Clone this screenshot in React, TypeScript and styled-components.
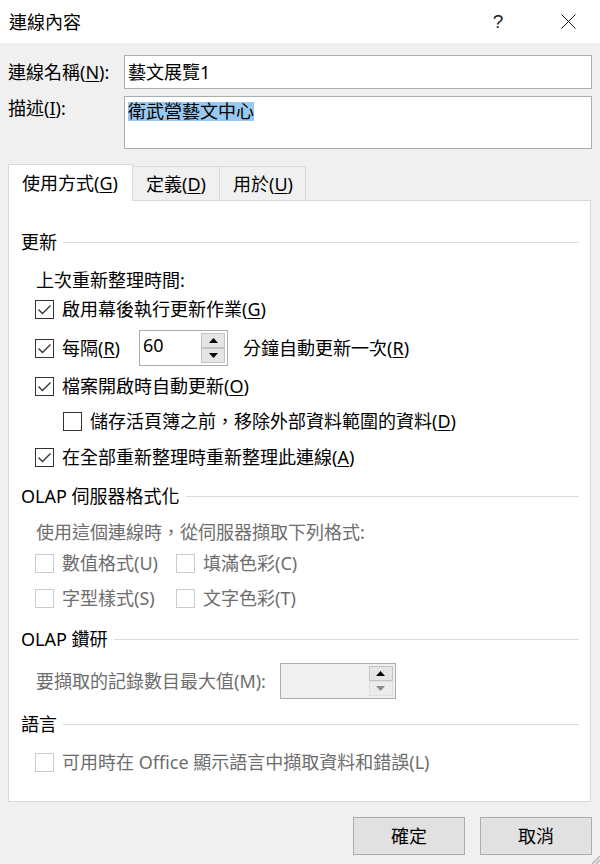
import styled, { createGlobalStyle } from 'styled-components';

const GlobalStyle = createGlobalStyle`
  html, body {
    margin: 0;
    padding: 0;
    background: #f0f0f0;
  }
  body {
    font-family: "Noto Sans", "Noto Sans CJK TC", sans-serif;
    color: #000;
  }
`;

const Dialog = styled.div`
  position: relative;
  width: 600px;
  height: 864px;
  background: #f0f0f0;
  display: flex;
  flex-direction: column;
  font-size: 18px;
  overflow: hidden;
`;

const TitleBar = styled.div`
  flex-shrink: 0;
  height: 43px;
  background: #fff;
  display: flex;
  align-items: center;
  padding: 0 9px 0 9px;
`;

const Title = styled.div`
  flex: 1;
  font-size: 18px;
  line-height: 24px;
`;

const TitleButton = styled.div<{ $gap?: number }>`
  width: 46px;
  height: 43px;
  display: flex;
  align-items: center;
  justify-content: center;
  margin-right: ${(p) => p.$gap ?? 0}px;
`;

const HelpGlyph = styled.span`
  font-family: "Liberation Sans", sans-serif;
  font-size: 19px;
  color: #1a1a1a;
`;

const Body = styled.div`
  display: flex;
  flex-direction: column;
  padding: 12px 8px 0 8px;
`;

const FormGrid = styled.div`
  display: grid;
  grid-template-columns: 116px 1fr;
  row-gap: 7px;
`;

const FieldLabel = styled.div<{ $top?: boolean }>`
  line-height: 24px;
  align-self: ${(p) => (p.$top ? 'start' : 'center')};
  white-space: nowrap;
`;

const TextBox = styled.div<{ $h: number }>`
  box-sizing: border-box;
  height: ${(p) => p.$h}px;
  border: 1px solid #adadad;
  background: #fff;
  padding: 0 3px;
  display: flex;
  align-items: ${(p) => (p.$h > 40 ? 'flex-start' : 'center')};
  padding-top: ${(p) => (p.$h > 40 ? 5 : 0)}px;
  line-height: 24px;
`;

const Selected = styled.span`
  display: inline-block;
  background: #99c9ef;
  line-height: 19px;
`;

const Key = styled.span`
  text-decoration: underline;
  text-underline-offset: 2px;
  text-decoration-thickness: 1px;
`;

const TabRow = styled.div`
  display: flex;
  align-items: flex-end;
  height: 36px;
  margin-top: 15px;
`;

const Tab = styled.div<{ $active?: boolean; $w: number }>`
  position: relative;
  z-index: 1;
  box-sizing: border-box;
  width: ${(p) => p.$w}px;
  height: ${(p) => (p.$active ? 37 : 34)}px;
  margin-bottom: ${(p) => (p.$active ? -1 : 0)}px;
  background: ${(p) => (p.$active ? '#fff' : '#f0f0f0')};
  border: 1px solid #d9d9d9;
  border-bottom: none;
  border-left: ${(p) => (p.$active ? '1px solid #d9d9d9' : 'none')};
  display: flex;
  align-items: center;
  padding-left: 13px;
  line-height: 24px;
  white-space: nowrap;
`;

const Panel = styled.div`
  box-sizing: border-box;
  height: 602px;
  margin-right: 1px;
  background: #fff;
  border: 1px solid #d9d9d9;
  padding: 0 11px 0 12px;
  display: flex;
  flex-direction: column;
`;

const SectionHead = styled.div<{ $mt: number }>`
  display: flex;
  align-items: center;
  gap: 6px;
  height: 24px;
  line-height: 24px;
  margin-top: ${(p) => p.$mt}px;
  white-space: nowrap;

  &::after {
    content: '';
    flex: 1;
    height: 1px;
    background: #dcdcdc;
  }
`;

const Row = styled.div<{ $mt: number; $indent: number; $h?: number }>`
  display: flex;
  align-items: center;
  height: ${(p) => p.$h ?? 24}px;
  margin-top: ${(p) => p.$mt}px;
  margin-left: ${(p) => p.$indent}px;
  line-height: 24px;
  white-space: nowrap;
`;

const Text = styled.span<{ $disabled?: boolean }>`
  color: ${(p) => (p.$disabled ? '#6d6d6d' : '#000')};
`;

const CheckLabel = styled.div`
  display: flex;
  align-items: center;
  gap: 8px;
  height: 24px;
  line-height: 24px;
  white-space: nowrap;
`;

const Box = styled.span<{ $disabled?: boolean }>`
  flex-shrink: 0;
  box-sizing: border-box;
  width: 19px;
  height: 19px;
  border: 1px solid ${(p) => (p.$disabled ? '#cccccc' : '#333333')};
  background: #fff;
  display: flex;
  align-items: center;
  justify-content: center;
`;

const OptionGrid = styled.div`
  display: grid;
  grid-template-columns: 141px auto;
  row-gap: 11px;
  margin-top: 7px;
  margin-left: 14px;
`;

const SpinBox = styled.div<{ $w: number; $disabled?: boolean }>`
  box-sizing: border-box;
  width: ${(p) => p.$w}px;
  height: 36px;
  border: 1px solid #adadad;
  background: ${(p) => (p.$disabled ? '#f0f0f0' : '#fff')};
  display: flex;
`;

const SpinValue = styled.div`
  flex: 1;
  padding: 2px 0 0 3px;
  line-height: 24px;
`;

const SpinColumn = styled.div`
  width: 24px;
  margin: 2px 2px 2px 0;
  display: flex;
  flex-direction: column;
`;

const SpinButton = styled.div<{ $dim?: boolean }>`
  flex: 1;
  box-sizing: border-box;
  border: 1px solid ${(p) => (p.$dim ? '#e0e0e0' : '#c4c4c4')};
  background: ${(p) => (p.$dim ? '#ececec' : '#e5e5e5')};
  display: flex;
  align-items: center;
  justify-content: center;
`;

const ButtonRow = styled.div`
  display: flex;
  justify-content: flex-end;
  gap: 15px;
  margin-top: 15px;
`;

const DialogButton = styled.div`
  box-sizing: border-box;
  width: 112px;
  height: 38px;
  background: #e1e1e1;
  border: 1px solid #adadad;
  display: flex;
  align-items: center;
  justify-content: center;
  line-height: 24px;
`;

const Grip = styled.svg`
  position: absolute;
  right: 0;
  bottom: 0;
`;

const Check = ({ checked, disabled }: { checked?: boolean; disabled?: boolean }) => (
  <Box $disabled={disabled}>
    {checked && (
      <svg width="17" height="17" viewBox="0 0 17 17">
        <path d="M2.5 8.5 L6.5 12.5 L14.5 4.5" fill="none" stroke="#333" strokeWidth="1.3" />
      </svg>
    )}
  </Box>
);

const Arrow = ({ up, color }: { up?: boolean; color: string }) => (
  <svg width="9" height="5" viewBox="0 0 9 5">
    <path d={up ? 'M0 5 L4.5 0 L9 5 Z' : 'M0 0 L9 0 L4.5 5 Z'} fill={color} />
  </svg>
);

const CheckItem = ({
  checked,
  disabled,
  children,
}: {
  checked?: boolean;
  disabled?: boolean;
  children: React.ReactNode;
}) => (
  <CheckLabel>
    <Check checked={checked} disabled={disabled} />
    <Text $disabled={disabled}>{children}</Text>
  </CheckLabel>
);

export default function App() {
  return (
    <>
      <GlobalStyle />
      <Dialog>
        <TitleBar>
          <Title>連線內容</Title>
          <TitleButton $gap={24}>
            <HelpGlyph>?</HelpGlyph>
          </TitleButton>
          <TitleButton>
            <svg width="15" height="15" viewBox="0 0 15 15">
              <path d="M0.5 0.5 L14.5 14.5 M14.5 0.5 L0.5 14.5" stroke="#111" strokeWidth="1" />
            </svg>
          </TitleButton>
        </TitleBar>

        <Body>
          <FormGrid>
            <FieldLabel>
              連線名稱(<Key>N</Key>):
            </FieldLabel>
            <TextBox $h={34}>藝文展覽1</TextBox>
            <FieldLabel $top>
              描述(<Key>I</Key>):
            </FieldLabel>
            <TextBox $h={53}>
              <Selected>衛武營藝文中心</Selected>
            </TextBox>
          </FormGrid>

          <TabRow>
            <Tab $active $w={125}>
              使用方式(<Key>G</Key>)
            </Tab>
            <Tab $w={87}>
              定義(<Key>D</Key>)
            </Tab>
            <Tab $w={86}>
              用於(<Key>U</Key>)
            </Tab>
          </TabRow>

          <Panel>
            <SectionHead $mt={29}>更新</SectionHead>
            <Row $mt={14} $indent={15}>
              <Text>上次重新整理時間:</Text>
            </Row>
            <Row $mt={5} $indent={14}>
              <CheckItem checked>
                啟用幕後執行更新作業(<Key>G</Key>)
              </CheckItem>
            </Row>
            <Row $mt={9} $indent={14} $h={36}>
              <CheckItem checked>
                每隔(<Key>R</Key>)
              </CheckItem>
              <SpinBox $w={89} style={{ marginLeft: 19 }}>
                <SpinValue>60</SpinValue>
                <SpinColumn>
                  <SpinButton>
                    <Arrow up color="#000" />
                  </SpinButton>
                  <SpinButton>
                    <Arrow color="#000" />
                  </SpinButton>
                </SpinColumn>
              </SpinBox>
              <Text style={{ marginLeft: 15 }}>
                分鐘自動更新一次(<Key>R</Key>)
              </Text>
            </Row>
            <Row $mt={8} $indent={14}>
              <CheckItem checked>
                檔案開啟時自動更新(<Key>O</Key>)
              </CheckItem>
            </Row>
            <Row $mt={11} $indent={42}>
              <CheckItem>
                儲存活頁簿之前，移除外部資料範圍的資料(<Key>D</Key>)
              </CheckItem>
            </Row>
            <Row $mt={12} $indent={14}>
              <CheckItem checked>
                在全部重新整理時重新整理此連線(<Key>A</Key>)
              </CheckItem>
            </Row>

            <SectionHead $mt={15}>OLAP 伺服器格式化</SectionHead>
            <Row $mt={12} $indent={15}>
              <Text $disabled>使用這個連線時，從伺服器擷取下列格式:</Text>
            </Row>
            <OptionGrid>
              <CheckItem disabled>數值格式(U)</CheckItem>
              <CheckItem disabled>填滿色彩(C)</CheckItem>
              <CheckItem disabled>字型樣式(S)</CheckItem>
              <CheckItem disabled>文字色彩(T)</CheckItem>
            </OptionGrid>

            <SectionHead $mt={17}>OLAP 鑽研</SectionHead>
            <Row $mt={12} $indent={15} $h={36}>
              <Text $disabled>要擷取的記錄數目最大值(M):</Text>
              <SpinBox $w={116} $disabled style={{ marginLeft: 14 }}>
                <SpinValue />
                <SpinColumn>
                  <SpinButton>
                    <Arrow up color="#000" />
                  </SpinButton>
                  <SpinButton $dim>
                    <Arrow color="#8c8c8c" />
                  </SpinButton>
                </SpinColumn>
              </SpinBox>
            </Row>

            <SectionHead $mt={13}>語言</SectionHead>
            <Row $mt={14} $indent={14}>
              <CheckItem disabled>可用時在 Office 顯示語言中擷取資料和錯誤(L)</CheckItem>
            </Row>
          </Panel>

          <ButtonRow>
            <DialogButton>確定</DialogButton>
            <DialogButton>取消</DialogButton>
          </ButtonRow>
        </Body>

        <Grip width="10" height="10" viewBox="0 0 10 10">
          <path d="M10 2 L2 10 M10 6 L6 10" stroke="#b5b5b5" strokeWidth="1.5" />
        </Grip>
      </Dialog>
    </>
  );
}
